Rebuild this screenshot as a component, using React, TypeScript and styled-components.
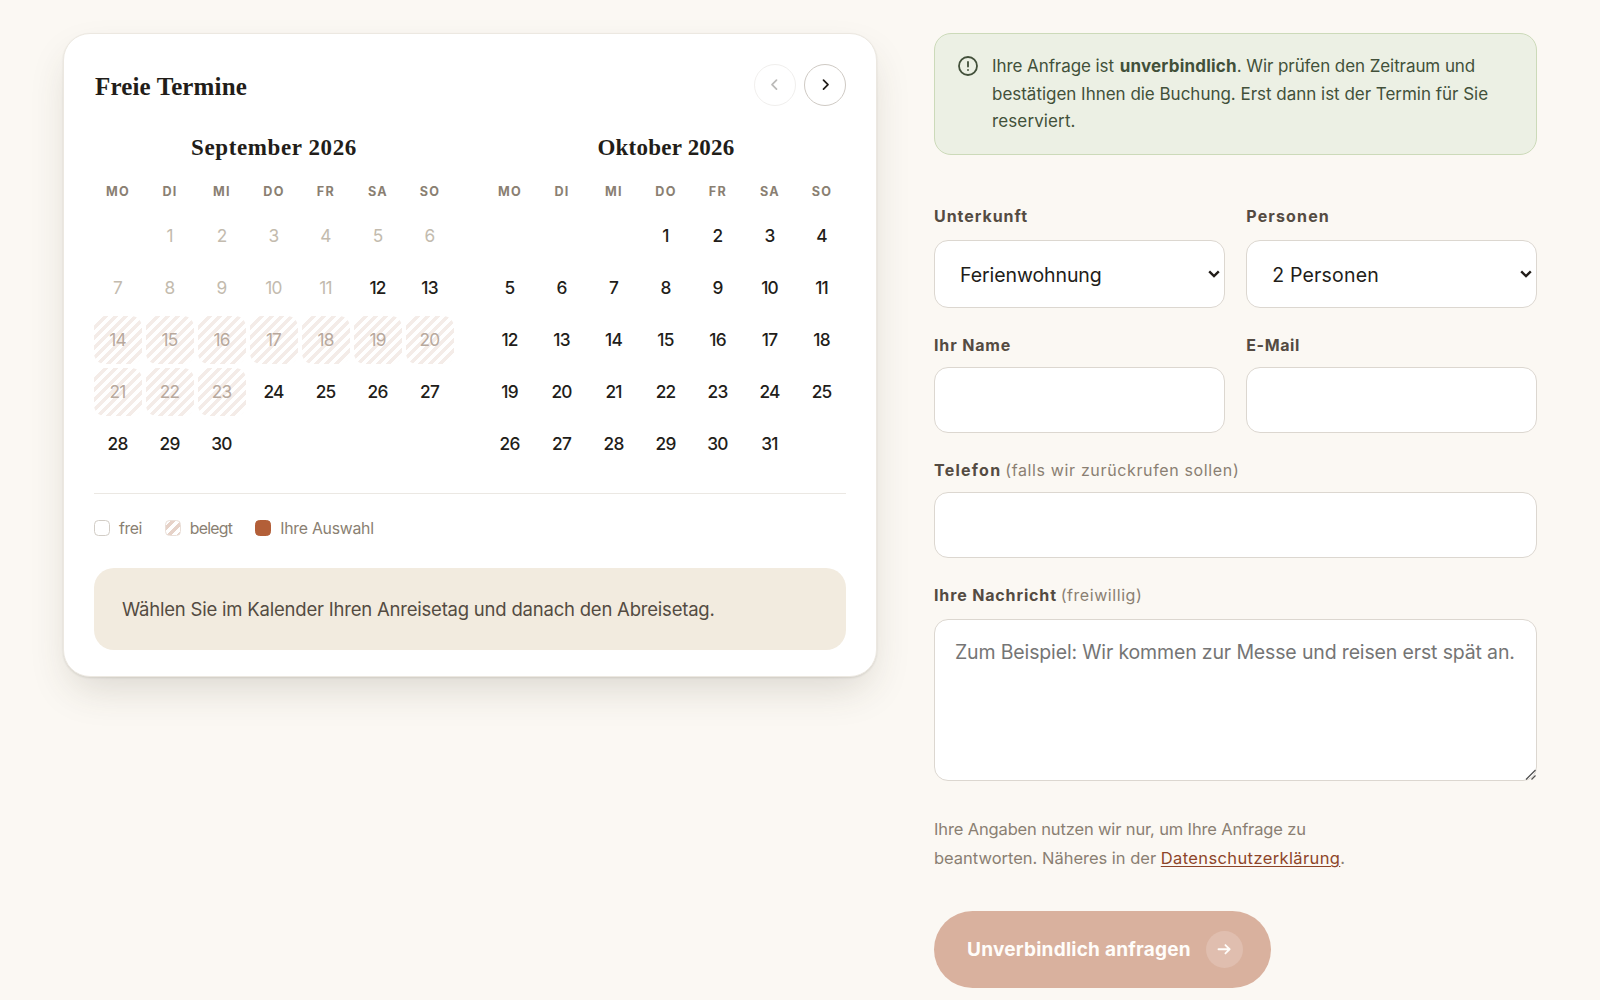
import React from "react";
import styled, { createGlobalStyle } from "styled-components";

const colors = {
  page: "#fbf8f3",
  ink: "#221d19",
  body: "#544b42",
  muted: "#8a7f72",
  faint: "#c3bbae",
  line: "#dcd7d0",
  rust: "#b35f38",
  link: "#8d4529",
};

const GlobalStyle = createGlobalStyle`
  *, *::before, *::after { box-sizing: border-box; }
  body {
    margin: 0;
    background: ${colors.page};
    color: ${colors.ink};
    font-family: Inter, "Liberation Sans", sans-serif;
    overflow: hidden;
  }
  button, input, select, textarea { font-family: inherit; color: inherit; }
`;

const Page = styled.main`
  display: grid;
  grid-template-columns: 814px 603px;
  column-gap: 57px;
  align-items: start;
  height: 1000px;
  padding: 33px 63px 0;
  overflow: hidden;
`;

const Track = styled.span<{ $ls: number }>`
  letter-spacing: ${(p) => p.$ls}px;
`;

/* ---------- calendar ---------- */

const CalendarCard = styled.section`
  height: 644px;
  padding: 30px 30px 25px;
  border: 1px solid #ece8e1;
  border-radius: 27px;
  background: #fff;
  box-shadow: 0 1px 2px rgba(60, 55, 40, 0.12), 0 18px 40px -8px rgba(66, 60, 40, 0.18);
`;

const CardHeader = styled.header`
  display: flex;
  align-items: center;
  justify-content: space-between;
  height: 42px;
`;

const CardTitle = styled.h2`
  margin: 4px 0 0 1px;
  font: 700 25px/32px "Liberation Serif", serif;
  letter-spacing: 0.13px;
`;

const NavGroup = styled.div`
  display: flex;
  gap: 8px;
`;

const NavButton = styled.button`
  display: grid;
  place-items: center;
  width: 42px;
  height: 42px;
  padding: 0;
  border: 1px solid #cfcac4;
  border-radius: 50%;
  background: transparent;
  color: ${colors.ink};
  &:disabled {
    opacity: 0.3;
  }
`;

const Months = styled.div`
  display: grid;
  grid-template-columns: 1fr 1fr;
  gap: 32px;
  margin-top: 25px;
`;

const MonthTitle = styled.h3`
  margin: 0;
  text-align: center;
  font: 700 23px/34px "Liberation Serif", serif;
`;

const WeekGrid = styled.div`
  display: grid;
  grid-template-columns: repeat(7, 1fr);
  gap: 4px;
`;

const Weekdays = styled(WeekGrid)`
  margin: 18px 0 11px;
`;

const Weekday = styled.span`
  text-align: center;
  font-size: 12.6px;
  font-weight: 700;
  line-height: 18px;
  letter-spacing: 1.3px;
  color: ${colors.muted};
`;

type DayState = "free" | "past" | "booked";

const Day = styled.button<{ $state: DayState; $start?: number }>`
  height: 48px;
  padding: 0 1px 2px 0;
  border: 0;
  border-radius: 11px;
  background: ${(p) =>
    p.$state === "booked"
      ? "repeating-linear-gradient(135deg, #f4ece8 0 3.5px, #fff 3.5px 7px)"
      : "transparent"};
  grid-column-start: ${(p) => p.$start ?? "auto"};
  color: ${(p) => (p.$state === "free" ? colors.ink : p.$state === "past" ? colors.faint : "#b8a99d")};
  font-size: 17.3px;
  font-weight: ${(p) => (p.$state === "free" ? 500 : 400)};
  letter-spacing: -0.8px;
`;

const Legend = styled.div`
  display: flex;
  align-items: center;
  gap: 23px;
  height: 49px;
  margin-top: 25px;
  padding-top: 20px;
  border-top: 1px solid #ebe8e3;
`;

const LegendItem = styled.span<{ $ls: number }>`
  display: flex;
  align-items: center;
  gap: 9px;
  height: 28px;
  font-size: 15.8px;
  color: ${colors.muted};
  letter-spacing: ${(p) => p.$ls}px;
`;

const Swatch = styled.i<{ $kind: "free" | "booked" | "selected" }>`
  width: 16px;
  height: 16px;
  border-radius: 4.5px;
  border: 1px solid
    ${(p) => (p.$kind === "free" ? "#d2cdc6" : p.$kind === "booked" ? "#eadfd8" : colors.rust)};
  background: ${(p) =>
    p.$kind === "free"
      ? "#fff"
      : p.$kind === "booked"
        ? "repeating-linear-gradient(135deg, #fff 0 3.5px, #e6d2c8 3.5px 7px)"
        : colors.rust};
`;

const Hint = styled.p`
  display: flex;
  align-items: center;
  height: 82px;
  margin: 26px 0 0;
  padding: 0 28px;
  border-radius: 20px;
  background: #f2ebdf;
  color: ${colors.body};
  font-size: 18.5px;
  letter-spacing: -0.21px;
  white-space: nowrap;
`;

/* ---------- form ---------- */

const FormColumn = styled.form`
  display: flex;
  flex-direction: column;
`;

const Notice = styled.div`
  display: flex;
  gap: 12px;
  height: 122px;
  padding: 19px 20px 0 21px;
  border: 1px solid #ccdab9;
  border-radius: 17px;
  background: #ecf0e4;
  color: #42503a;
`;

const NoticeIcon = styled.svg`
  flex: none;
  width: 24px;
  height: 24px;
  margin-top: 0.5px;
`;

const NoticeText = styled.p`
  margin: 0;
  font-size: 17px;
  line-height: 27.5px;
  white-space: nowrap;
`;

const Line = styled.span<{ $ls: number }>`
  display: block;
  letter-spacing: ${(p) => p.$ls}px;
`;

const Strong = styled.strong`
  margin-left: 1px;
  font-weight: 700;
  letter-spacing: 0.2px;
`;

const FieldRow = styled.div`
  display: grid;
  grid-template-columns: 1fr 1fr;
  column-gap: 21.5px;
`;

const Field = styled.label<{ $top: number; $gap: number }>`
  display: flex;
  flex-direction: column;
  gap: ${(p) => p.$gap}px;
  margin-top: ${(p) => p.$top}px;
`;

const Label = styled.span`
  font-size: 16px;
  font-weight: 700;
  line-height: 24px;
  color: ${colors.body};
  white-space: nowrap;
`;

const Optional = styled.span<{ $ls: number }>`
  font-weight: 400;
  color: ${colors.muted};
  letter-spacing: ${(p) => p.$ls}px;
`;

const Input = styled.input`
  width: 100%;
  height: 66px;
  padding: 0 21px;
  border: 1px solid ${colors.line};
  border-radius: 14px;
  background: #fff;
  font-size: 19.5px;
`;

const Control = styled.span`
  position: relative;
  display: block;
`;

const Select = styled.select<{ $ls: number }>`
  display: block;
  appearance: none;
  width: 100%;
  height: 68px;
  padding: 2px 24px 0 25px;
  border: 1px solid ${colors.line};
  border-radius: 14px;
  background: #fff;
  font-size: 19.5px;
  letter-spacing: ${(p) => p.$ls}px;
`;

const SelectArrow = styled.svg`
  position: absolute;
  top: 30px;
  right: 5px;
  width: 12px;
  height: 8px;
  pointer-events: none;
`;

const ResizeGrip = styled.svg`
  position: absolute;
  right: 1px;
  bottom: 1px;
  width: 11px;
  height: 11px;
  pointer-events: none;
`;

const Textarea = styled.textarea`
  display: block;
  width: 100%;
  height: 162px;
  padding: 18px 10px 18px 20px;
  border: 1px solid ${colors.line};
  border-radius: 14px;
  background: #fff;
  font-size: 19.5px;
  line-height: 29px;
  letter-spacing: -0.15px;
  resize: none;
  &::placeholder {
    color: #757575;
  }
`;

const Privacy = styled.p`
  margin: 34px 0 0;
  font-size: 16.5px;
  line-height: 29px;
  color: ${colors.muted};
  white-space: nowrap;
`;

const PrivacyLink = styled.a`
  color: ${colors.link};
  letter-spacing: 0.38px;
  text-decoration: underline;
  text-decoration-thickness: 1px;
  text-underline-offset: 2px;
`;

const SubmitButton = styled.button`
  display: flex;
  align-items: center;
  justify-content: space-between;
  width: 337px;
  height: 77px;
  margin-top: 38px;
  padding: 0 28px 0 33px;
  border: 0;
  border-radius: 39px;
  background: #d9b19e;
  color: #fffdfa;
  font-size: 19px;
  font-weight: 700;
  letter-spacing: 0.24px;
`;

const ArrowBadge = styled.span`
  display: grid;
  place-items: center;
  width: 37px;
  height: 37px;
  border-radius: 50%;
  background: #e0beaf;
`;

function Stroke({ d, size }: { d: string; size: number }) {
  return (
    <svg
      width={size}
      height={size}
      viewBox="0 0 24 24"
      fill="none"
      stroke="currentColor"
      strokeWidth="2.3"
      strokeLinecap="round"
      strokeLinejoin="round"
    >
      <path d={d} />
    </svg>
  );
}

function Dropdown({ value, tracking }: { value: string; tracking: number }) {
  return (
    <Control>
      <Select $ls={tracking} defaultValue={value}>
        <option>{value}</option>
      </Select>
      <SelectArrow viewBox="0 0 12 8" fill="none" stroke={colors.ink} strokeWidth="2.4">
        <path d="M1.2 1.4L6 6.1l4.8-4.7" />
      </SelectArrow>
    </Control>
  );
}

const WEEKDAYS = ["MO", "DI", "MI", "DO", "FR", "SA", "SO"];

interface MonthProps {
  title: string;
  tracking: number;
  firstColumn: number;
  length: number;
  stateOf: (day: number) => DayState;
}

function Month({ title, tracking, firstColumn, length, stateOf }: MonthProps) {
  return (
    <div>
      <MonthTitle>
        <Track $ls={tracking}>{title}</Track>
      </MonthTitle>
      <Weekdays>
        {WEEKDAYS.map((name) => (
          <Weekday key={name}>{name}</Weekday>
        ))}
      </Weekdays>
      <WeekGrid>
        {Array.from({ length }, (_, i) => i + 1).map((day) => (
          <Day
            key={day}
            type="button"
            $state={stateOf(day)}
            $start={day === 1 ? firstColumn : undefined}
          >
            {day}
          </Day>
        ))}
      </WeekGrid>
    </div>
  );
}

export default function App() {
  return (
    <>
      <GlobalStyle />
      <Page>
        <CalendarCard>
          <CardHeader>
            <CardTitle>Freie Termine</CardTitle>
            <NavGroup>
              <NavButton type="button" disabled>
                <Stroke size={18} d="M14 5.5l-6 6 6 6" />
              </NavButton>
              <NavButton type="button">
                <Stroke size={18} d="M10 5.5l6 6-6 6" />
              </NavButton>
            </NavGroup>
          </CardHeader>
          <Months>
            <Month
              title="September 2026"
              tracking={0.6}
              firstColumn={2}
              length={30}
              stateOf={(d) => (d < 12 ? "past" : d >= 14 && d <= 23 ? "booked" : "free")}
            />
            <Month
              title="Oktober 2026"
              tracking={0.22}
              firstColumn={4}
              length={31}
              stateOf={() => "free"}
            />
          </Months>
          <Legend>
            <LegendItem $ls={-0.45}>
              <Swatch $kind="free" />
              frei
            </LegendItem>
            <LegendItem $ls={-0.72}>
              <Swatch $kind="booked" />
              belegt
            </LegendItem>
            <LegendItem $ls={-0.25}>
              <Swatch $kind="selected" />
              Ihre Auswahl
            </LegendItem>
          </Legend>
          <Hint>Wählen Sie im Kalender Ihren Anreisetag und danach den Abreisetag.</Hint>
        </CalendarCard>

        <FormColumn>
          <Notice>
            <NoticeIcon
              viewBox="0 0 24 24"
              fill="none"
              stroke="currentColor"
              strokeWidth="1.8"
              strokeLinecap="round"
            >
              <circle cx="12" cy="12" r="9" />
              <path d="M12 7.9v4.7M12 16h.01" />
            </NoticeIcon>
            <NoticeText>
              <Line $ls={-0.08}>
                Ihre Anfrage ist <Strong>unverbindlich</Strong>. Wir prüfen den Zeitraum und
              </Line>
              <Line $ls={-0.02}>
                bestätigen Ihnen die Buchung. Erst dann ist der Termin für Sie
              </Line>
              <Line $ls={0.12}>reserviert.</Line>
            </NoticeText>
          </Notice>

          <FieldRow>
            <Field $top={49} $gap={12}>
              <Label>
                <Track $ls={0.95}>Unterkunft</Track>
              </Label>
              <Dropdown value="Ferienwohnung" tracking={-0.08} />
            </Field>
            <Field $top={49} $gap={12}>
              <Label>
                <Track $ls={1.15}>Personen</Track>
              </Label>
              <Dropdown value="2 Personen" tracking={0.18} />
            </Field>
            <Field $top={25} $gap={10}>
              <Label>
                <Track $ls={0.85}>Ihr Name</Track>
              </Label>
              <Input type="text" />
            </Field>
            <Field $top={25} $gap={10}>
              <Label>
                <Track $ls={0.6}>E-Mail</Track>
              </Label>
              <Input type="email" />
            </Field>
          </FieldRow>

          <Field $top={25} $gap={10}>
            <Label>
              <Track $ls={1.25}>Telefon</Track>{" "}
              <Optional $ls={0.64}>(falls wir zurückrufen sollen)</Optional>
            </Label>
            <Input type="tel" />
          </Field>
          <Field $top={25} $gap={12}>
            <Label>
              <Track $ls={0.85}>Ihre Nachricht</Track> <Optional $ls={0.56}>(freiwillig)</Optional>
            </Label>
            <Control>
              <Textarea placeholder="Zum Beispiel: Wir kommen zur Messe und reisen erst spät an." />
              <ResizeGrip viewBox="0 0 11 11" fill="none" stroke="#4f4f4f" strokeWidth="1.2">
                <path d="M1 10.5L10.5 1M6.5 10.5l4-4" />
              </ResizeGrip>
            </Control>
          </Field>

          <Privacy>
            <Line $ls={-0.14}>Ihre Angaben nutzen wir nur, um Ihre Anfrage zu</Line>
            <Line $ls={-0.01}>
              beantworten. Näheres in der <PrivacyLink>Datenschutzerklärung</PrivacyLink>.
            </Line>
          </Privacy>

          <SubmitButton type="button">
            Unverbindlich anfragen
            <ArrowBadge>
              <Stroke size={18.5} d="M4.5 12h14.5M13.5 6.5l5.5 5.5-5.5 5.5" />
            </ArrowBadge>
          </SubmitButton>
        </FormColumn>
      </Page>
    </>
  );
}
